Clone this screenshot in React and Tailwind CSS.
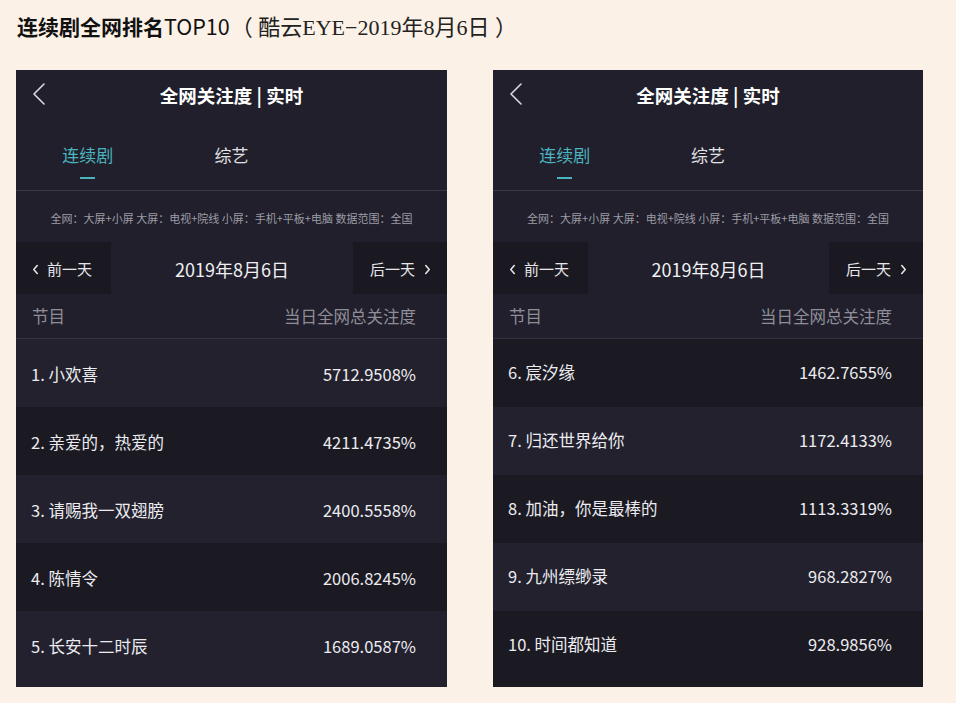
import React from "react";

const left = [
  ["1. 小欢喜", "5712.9508%"],
  ["2. 亲爱的，热爱的", "4211.4735%"],
  ["3. 请赐我一双翅膀", "2400.5558%"],
  ["4. 陈情令", "2006.8245%"],
  ["5. 长安十二时辰", "1689.0587%"],
];

const right = [
  ["6. 宸汐缘", "1462.7655%"],
  ["7. 归还世界给你", "1172.4133%"],
  ["8. 加油，你是最棒的", "1113.3319%"],
  ["9. 九州缥缈录", "968.2827%"],
  ["10. 时间都知道", "928.9856%"],
];

function Chevron({ dir, className }) {
  return (
    <svg viewBox="0 0 8 12" className={className} fill="none" stroke="currentColor" strokeWidth="1.8" strokeLinecap="round" strokeLinejoin="round">
      {dir === "left" ? <path d="M6 1.5 L2 6 L6 10.5" /> : <path d="M2 1.5 L6 6 L2 10.5" />}
    </svg>
  );
}

function Panel({ rows, firstLight, width, rowPad }) {
  return (
    <div className={`${width} h-[617px] flex flex-col bg-[#201f2b] overflow-hidden`}>
      {/* top bar */}
      <div className="relative h-[52px] flex items-center justify-center">
        <svg viewBox="0 0 14 22" className="absolute left-[16px] top-[13px] w-[14px] h-[22px] text-[#d8d8de]" fill="none" stroke="currentColor" strokeWidth="1.6" strokeLinecap="round" strokeLinejoin="round">
          <path d="M12 1 L2 11 L12 21" />
        </svg>
        <span className="text-[18.5px] font-bold text-white">全网关注度 | 实时</span>
      </div>

      {/* tabs */}
      <div className="h-[69px] grid grid-cols-3 border-b border-[#3a3946]">
        <div className="flex flex-col items-center pt-[20px]">
          <span className="text-[17px] leading-[26px] text-[#4cb4bf]">连续剧</span>
          <span className="mt-[9px] w-[15px] h-[1.5px] bg-[#4cb4bf]"></span>
        </div>
        <div className="flex flex-col items-center pt-[20px]">
          <span className="text-[17px] leading-[26px] text-[#e2e2e6]">综艺</span>
        </div>
      </div>

      {/* info */}
      <div className="h-[51px] pt-[3px] flex items-center justify-center text-[11px] text-[#9d9ca6]">
        全网：大屏+小屏 大屏：电视+院线 小屏：手机+平板+电脑 数据范围：全国
      </div>

      {/* date bar */}
      <div className="h-[52px] flex items-center justify-between">
        <div className="w-[95px] h-full bg-[#1a1921] flex items-center pl-[16px] pt-[2px] gap-[8px] text-[#e6e6ea] text-[15px]">
          <Chevron dir="left" className="w-[7px] h-[11px]" />
          <span>前一天</span>
        </div>
        <span className="text-[18px] pt-[2px] text-[#f0f0f2]">2019年8月6日</span>
        <div className="w-[94px] h-full bg-[#1a1921] flex items-center justify-end pr-[16px] pt-[2px] gap-[9px] text-[#e6e6ea] text-[15px]">
          <span>后一天</span>
          <Chevron dir="right" className="w-[7px] h-[11px]" />
        </div>
      </div>

      {/* column header */}
      <div className="h-[45px] flex items-center justify-between px-[16px] border-b border-[#33323e] text-[16.5px] text-[#8f8e98]">
        <span>节目</span>
        <span className="pr-[15px]">当日全网总关注度</span>
      </div>

      {/* rows */}
      <div className="flex-1 flex flex-col">
        {rows.map(([name, val], i) => {
          const light = firstLight ? i % 2 === 0 : i % 2 === 1;
          return (
            <div
              key={name}
              className={`${i === rows.length - 1 ? "flex-1" : "h-[68px]"} ${rowPad} flex items-start justify-between pl-[15px] pr-[31px] text-[16.5px] text-[#ececf0] ${light ? "bg-[#22212d]" : "bg-[#1b1a23]"}`}
            >
              <span>{name}</span>
              <span>{val}</span>
            </div>
          );
        })}
      </div>
    </div>
  );
}

export default function App() {
  return (
    <div
      className="w-[956px] h-[703px] bg-[#fcf1e7] overflow-hidden"
      style={{ fontFamily: '"Noto Sans CJK SC", "Noto Sans", sans-serif' }}
    >
      <div className="h-[70px] pl-[17px] pt-[11px] flex items-baseline text-[#111]">
        <span className="text-[21px] font-bold leading-[30px]">连续剧全网排名</span>
        <span className="text-[21.5px] leading-[30px]">TOP10</span>
        <span
          className="text-[22px] leading-[30px] text-[#222] ml-[1px]"
          style={{ fontFamily: '"Liberation Serif", "Noto Sans CJK SC", serif' }}
        >
          （ 酷云EYE−2019年8月6日 ）
        </span>
      </div>
      <div className="flex pl-[16px] gap-[46px]">
        <Panel rows={left} firstLight={true} width="w-[431px]" rowPad="pt-[23px]" />
        <Panel rows={right} firstLight={false} width="w-[430px]" rowPad="pt-[21px]" />
      </div>
    </div>
  );
}
